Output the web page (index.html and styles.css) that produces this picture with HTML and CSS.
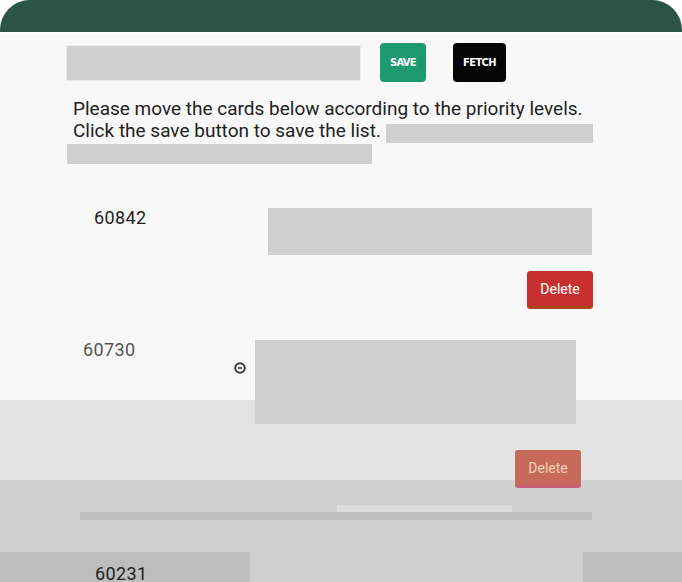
FILE: index.html
```html
<!DOCTYPE html>
<html lang="en">
<head>
<meta charset="utf-8">
<title>Priority list</title>
<link rel="stylesheet" href="styles.css">
</head>
<body>
<div class="app">
  <header class="topbar"></header>
  <main class="content">
    <div class="toolbar">
      <div class="skel skel-input"></div>
      <button class="btn btn-save">SAVE</button>
      <button class="btn btn-fetch">FETCH</button>
    </div>
    <p class="intro">Please move the cards below according to the priority levels.<br>Click the save button to save the list. <span class="skel skel-inline"></span></p>
    <div class="skel skel-line"></div>

    <section class="card card-a">
      <div class="card-row">
        <div class="card-meta"><span class="num">60842</span></div>
        <div class="skel skel-body"></div>
      </div>
      <div class="card-actions"><button class="btn btn-delete">Delete</button></div>
    </section>

    <section class="card card-b">
      <div class="card-row">
        <div class="card-meta">
          <span class="num num-muted">60730</span>
          <svg class="handle" width="14" height="14" viewBox="0 0 14 14"><circle cx="7" cy="7" r="4.8" fill="none" stroke="#3a3a3a" stroke-width="2"/><path d="M5 7h4" stroke="#3a3a3a" stroke-width="1.6"/></svg>
        </div>
        <div class="skel skel-body"></div>
      </div>
      <div class="card-actions"><button class="btn btn-delete btn-faded">Delete</button></div>
    </section>

    <div class="divider">
      <div class="divider-hint"></div>
      <div class="divider-line"></div>
    </div>

    <section class="card card-c">
      <div class="card-c-left"><span class="num">60231</span></div>
      <div class="card-c-mid"></div>
      <div class="card-c-right"></div>
    </section>
  </main>
</div>
</body>
</html>
```

FILE: styles.css
```css
html, body {
  margin: 0;
  padding: 0;
  background: #ffffff;
  height: 100%;
  overflow: hidden;
}

.app {
  width: 682px;
  font-family: Roboto, "Liberation Sans", sans-serif;
  color: #222;
}

.topbar {
  height: 32px;
  background: #2a5445;
  border-radius: 30px 30px 0 0;
  border-bottom: 2px solid #ffffff;
}

.content {
  min-height: 548px;
  display: flex;
  flex-direction: column;
  background: linear-gradient(to bottom,
    #f8f8f8 0, #f8f8f8 366px,
    #e3e3e3 366px, #e3e3e3 446px,
    #d0d0d0 446px, #d0d0d0 100%);
}

.skel {
  background: #cfcfcf;
}

.toolbar {
  display: flex;
  align-items: center;
  padding: 9px 0 0 67px;
}

.skel-input {
  width: 293px;
  height: 34px;
  box-shadow: 0 0 0 1px #ececec;
}

.btn {
  border: 0;
  margin: 0;
  padding: 0;
  color: #fff;
  cursor: pointer;
}

.btn-save,
.btn-fetch {
  height: 39px;
  border-radius: 4px;
  font-family: "DejaVu Sans Condensed", "Liberation Sans", sans-serif;
  font-weight: bold;
  font-size: 11px;
  letter-spacing: -0.6px;
}

.btn-save {
  width: 46px;
  margin-left: 20px;
  background: #1f9a70;
}

.btn-fetch {
  width: 53px;
  margin-left: 27px;
  background: #050505;
}

.intro {
  margin: 16px 0 0;
  padding-left: 73px;
  font-size: 19px;
  line-height: 22px;
  color: #222;
}

.skel-inline {
  display: inline-block;
  width: 207px;
  height: 19px;
  vertical-align: -6px;
}

.skel-line {
  margin: 1px 0 0 67px;
  width: 305px;
  height: 20px;
}

.card {
  display: flex;
  flex-direction: column;
}

.card-row {
  display: flex;
  align-items: flex-start;
}

.num {
  font-size: 18px;
  line-height: 20px;
  letter-spacing: 0.4px;
  color: #222;
}

.num-muted {
  color: #555;
}

.card-actions {
  display: flex;
  justify-content: flex-end;
}

.btn-delete {
  width: 66px;
  height: 38px;
  border-radius: 3px;
  background: #c8302f;
  border-bottom: 3px solid #b0421c;
  font-size: 14px;
  font-family: Roboto, "Liberation Sans", sans-serif;
}

.btn-faded {
  background: #c86a5b;
  border-bottom: 3px solid #c9607a;
  color: #f3d0b8;
}

/* card A */
.card-a {
  margin-top: 44px;
}

.card-a .card-row {
  padding-left: 94px;
}

.card-a .card-meta {
  width: 174px;
}

.card-a .skel-body {
  width: 324px;
  height: 47px;
}

.card-a .card-actions {
  margin-top: 16px;
  padding-right: 89px;
}

/* card B */
.card-b {
  margin-top: 31px;
}

.card-b .card-row {
  padding-left: 83px;
}

.card-b .card-meta {
  width: 172px;
  display: flex;
  justify-content: space-between;
  align-items: flex-start;
  padding-top: 0;
}

.handle {
  margin: 21px 8px 0 0;
}

.card-b .skel-body {
  width: 321px;
  height: 84px;
}

.card-b .card-actions {
  margin-top: 26px;
  padding-right: 101px;
}

/* divider */
.divider {
  margin-top: 17px;
  display: flex;
  flex-direction: column;
}

.divider-hint {
  margin-left: 337px;
  width: 175px;
  height: 7px;
  background: #dcdcdc;
}

.divider-line {
  margin-left: 80px;
  width: 512px;
  height: 8px;
  background: #bdbdbd;
}

/* card C */
.card-c {
  margin-top: 32px;
  flex-direction: row;
  height: 40px;
}

.card-c-left {
  width: 155px;
  padding: 12px 0 0 95px;
  background: #bdbdbd;
}

.card-c-mid {
  width: 333px;
  background: #cfcfcf;
}

.card-c-right {
  flex: 1;
  background: #bdbdbd;
}
```
